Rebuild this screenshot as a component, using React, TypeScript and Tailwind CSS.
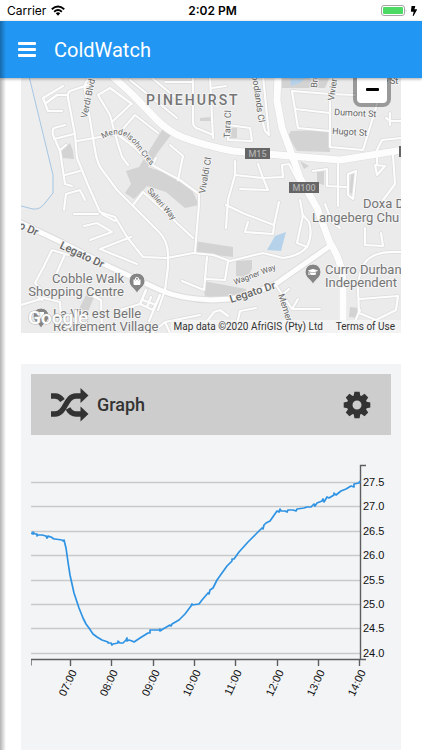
import { FaShoppingBag, FaGraduationCap, FaBolt } from "react-icons/fa";

type Label = {
  text: string;
  x: number;
  y: number;
  size: number;
  rotate?: number;
  weight?: number;
  anchor?: "start" | "middle" | "end";
};

const roads = {
  major: [
    "M108 72 L133 95 L157 120 Q168 131 182 137 Q206 146 233 151 L290 156 L340 160 L403 150",
    "M278 74 L277 101 L282 128 L292 155 L300 178 L317 208 L330 243 Q343 262 343 285 V335",
  ],
  medium: [
    "M19 222 L63 243 L110 267 L160 290 Q180 299 211 300 L230 299 Q253 295 277 283 L330 246",
  ],
  minor: [
    "M91 76 Q83 84 85 90 L90 120 L95 150 Q97 164 103 171 L117 190 L133 206 L157 230 Q168 240 168 255 V267 L165 290",
    "M91 84 L70 91 Q67 93 68 98 L75 135 L77 158 L88 185 L100 212 L115 217 L127 237 L143 257 L167 258 L193 253",
    "M63 86 L43 98 L48 111 H62",
    "M46 103 L57 95 L68 95",
    "M65 125 L54 128 Q52 130 53 135 L60 151 L65 184 L72 186",
    "M54 139 L74 134",
    "M65 175 L80 171",
    "M60 150 L66 145",
    "M77 141 L117 134 L133 146 L152 165 L180 180 L199 194 V204 L195 252",
    "M130 105 L113 121 M132 104 L110 88 L98 95 L110 115 L117 141 L122 157 L128 165",
    "M122 130 L135 115 L158 133",
    "M130 80 L177 118 M152 78 L175 97",
    "M170 145 L183 156 L178 180",
    "M193 76 V122 Q193 128 199 129 L213 135",
    "M165 82 H193",
    "M153 164 L156 158",
    "M64 210 L66 194 L80 190 L85 200",
    "M74 214 H98 M84 226 L97 223 L112 232 L90 240",
    "M115 221 L102 214 M100 249 L137 264 M100 249 L131 237",
    "M72 256 L52 250 L43 268 L35 283 L42 290",
    "M65 254 L55 277",
    "M133 205 L143 192 L162 209 L193 238",
    "M193 253 L213 255 L230 261 L263 253 L283 258 Q299 256 307 247 Q313 235 309 222 L303 215 L297 243 L307 247",
    "M207 257 L204 290 L182 281",
    "M228 261 L225 280 L206 279",
    "M146 290 L140 304 L153 310 L160 295",
    "M151 297 L147 307 M143 300 L156 305",
    "M160 295 L149 321 M165 290 L158 310",
    "M263 76 L269 135 L265 131 L253 84",
    "M210 76 L213 138",
    "M212 88 L226 86",
    "M228 125 L250 128 L252 141 L228 140 Z",
    "M292 91 L330 94 L355 95",
    "M292 91 L298 128 L330 131",
    "M295 109 L330 113",
    "M330 92 V147 L363 150 L377 104",
    "M401 138 L382 140 L377 150 V164",
    "M386 118 L390 121 L401 121 M390 113 V125",
    "M385 166 L377 175 L375 165 L385 166",
    "M393 155 L395 184 L383 200",
    "M235 161 V175 L228 200 L226 228",
    "M235 175 L263 178 L283 177 L282 165 L289 164 L300 185",
    "M258 164 L263 178 L268 190 L240 189",
    "M313 171 L327 169 V186 L346 187",
    "M338 164 V206",
    "M348 174 L356 171 L353 199 L348 195 Z",
    "M226 205 L245 214 L274 225 L273 234 L245 232 L248 222",
    "M274 225 L279 202",
    "M300 200 L303 217",
    "M275 284 L292 309 H320",
    "M292 309 L298 299 M283 294 L289 289",
    "M365 228 V245 L383 246 L381 233",
    "M401 252 Q382 251 373 256 Q359 262 358 290 L359 313 L376 320 L396 310 L398 296 L360 299",
    "M325 204 L332 222 L340 228",
    "M21 305 L44 298 L60 302 L62 333 M30 290 L42 300",
    "M93 296 L101 300 L102 330 M80 290 V300",
    "M150 335 L165 322 L200 315 M165 322 L170 333",
    "M120 310 L140 304 L146 290",
    "M200 330 L214 312 L220 310 L228 316",
    "M235 333 L240 311 L256 308",
    "M360 310 L350 333 M376 320 L377 333",
  ],
};

const buildings = [
  "M164 127 L174 131 L158 152 L148 167 L180 178 L192 190 L199 205 L185 208 L166 192 L147 186 L134 199 L125 193 L131 184 L126 171 L139 167 Z",
  "M70 143 L73 151 L74 159 L63 158 L60 153 Z",
  "M200 118 L211 117 V121 H200 Z",
  "M291 131 L330 130 V152 L297 151 L288 136 Z",
  "M282 76 H330 L325 88 L282 88 Z",
  "M194 241 L233 247 V257 L195 253 Z",
  "M236 261 L252 260 L252 269 L247 278 L236 276 Z",
  "M203 281 L230 286 L246 289 L248 299 L205 297 Z",
  "M230 128 L237 128 V138 L230 138 Z",
  "M317 172 L324 171 V185 L317 183 Z",
  "M351 174 L355 173 L353 195 L349 192 Z",
  "M350 307 L358 308 V318 L349 317 Z",
  "M86 295 L94 297 L88 312 L79 309 Z",
  "M300 161 L309 166 L304 169 Z",
];

const streetLabels: Label[] = [
  { text: "Verdi Blvd", x: 91, y: 99, size: 9, rotate: -78, anchor: "middle" },
  { text: "Salieri Way", x: 147, y: 191, size: 8, rotate: 49 },
  { text: "Vivaldi Cl", x: 205, y: 194, size: 9, rotate: -80 },
  { text: "Tara Cl", x: 230, y: 138, size: 9, rotate: -88 },
  { text: "Woodlands Cl", x: 251, y: 68, size: 9, rotate: 82 },
  { text: "Bri", x: 317, y: 88, size: 9, rotate: -86 },
  { text: "Vivier", x: 334, y: 101, size: 9, rotate: -82 },
  { text: "Dumont St", x: 334, y: 115, size: 9, rotate: 3 },
  { text: "Hugot St", x: 332, y: 134, size: 9, rotate: 3 },
  { text: "e St", x: 383, y: 84, size: 9 },
  { text: "Wagner Way", x: 235, y: 285, size: 8, rotate: -21 },
  { text: "Memer", x: 278, y: 295, size: 9, rotate: 72 },
  { text: "o Dr", x: 18, y: 228, size: 11, rotate: 24, weight: 500 },
  { text: "Legato Dr", x: 59, y: 248, size: 11, rotate: 25, weight: 500 },
  { text: "Legato Dr", x: 231, y: 303, size: 11, rotate: -18, weight: 500 },
];

const placeLabels: Label[] = [
  { text: "Cobble Walk", x: 124, y: 283, size: 13, anchor: "end" },
  { text: "Shopping Centre", x: 124, y: 296, size: 13, anchor: "end" },
  { text: "La Vie est Belle", x: 53, y: 318, size: 13 },
  { text: "Retirement Village", x: 53, y: 331, size: 13 },
  { text: "Doxa D", x: 363, y: 208, size: 13 },
  { text: "Langeberg Chu", x: 312, y: 222, size: 13 },
  { text: "Curro Durban", x: 325, y: 274, size: 13 },
  { text: "Independent", x: 325, y: 287, size: 13 },
];

const MapText = ({ label, color }: { label: Label; color: string }) => (
  <text
    x={label.x}
    y={label.y}
    fontSize={label.size}
    fontWeight={label.weight ?? 400}
    textAnchor={label.anchor ?? "start"}
    transform={
      label.rotate ? `rotate(${label.rotate} ${label.x} ${label.y})` : undefined
    }
    fill={color}
    stroke="#f4f4f4"
    strokeWidth={2}
    strokeLinejoin="round"
    paintOrder="stroke"
  >
    {label.text}
  </text>
);

const Pin = ({ x, y }: { x: number; y: number }) => (
  <path
    d={`M${x} ${y + 13} C${x - 1} ${y + 8} ${x - 8} ${y + 6} ${x - 8} ${y} A8 8 0 0 1 ${x + 8} ${y} C${x + 8} ${y + 6} ${x + 1} ${y + 8} ${x} ${y + 13}Z`}
    fill="#858585"
    stroke="#f0f0f0"
    strokeWidth={1}
  />
);

const RoadShield = ({
  text,
  x,
  y,
  width,
}: {
  text: string;
  x: number;
  y: number;
  width: number;
}) => (
  <g>
    <rect x={x} y={y} width={width} height={11} fill="#666" />
    <text
      x={x + width / 2}
      y={y + 9}
      fontSize={9}
      fontWeight={500}
      textAnchor="middle"
      fill="#b0b0b0"
    >
      {text}
    </text>
  </g>
);

const StreetMap = () => (
  <svg
    viewBox="21 78 380 255"
    className="block w-full bg-[#ebebeb]"
    role="img"
    aria-label="Map"
  >
    <path d="M21 78 H30 L53 175 V193 L40 207 L21 210Z" fill="#eeeeee" />
    {buildings.map((d) => (
      <path key={d} d={d} fill="#d3d3d3" />
    ))}
    <path d="M286 232 L281 251 L267 250 L275 236Z" fill="#b5d2ea" />
    <path d="M290 76 L308 76 L300 83 L291 86Z" fill="#b5d2ea" />
    <path
      d="M29 76 L53 175 V193 L45 203 Q40 210 33 209 L21 206"
      fill="none"
      stroke="#a5c6e2"
      strokeWidth={1}
    />
    <g fill="none" strokeLinejoin="round" strokeLinecap="round">
      <g stroke="#dcdcdc">
        {roads.minor.map((d) => (
          <path key={d} d={d} strokeWidth={3.6} />
        ))}
        {roads.medium.map((d) => (
          <path key={d} d={d} strokeWidth={7} />
        ))}
        {roads.major.map((d) => (
          <path key={d} d={d} strokeWidth={8} />
        ))}
      </g>
      <g stroke="#fdfdfd">
        {roads.minor.map((d) => (
          <path key={d} d={d} strokeWidth={2.2} />
        ))}
        {roads.medium.map((d) => (
          <path key={d} d={d} strokeWidth={5} />
        ))}
        {roads.major.map((d) => (
          <path key={d} d={d} strokeWidth={7} />
        ))}
      </g>
    </g>
    <RoadShield text="M15" x={245} y={148} width={25} />
    <RoadShield text="M100" x={289} y={182} width={30} />
    <rect x={399} y={146} width={4} height={11} fill="#666" />
    <path id="mendelsohn" d="M103 139 Q120 128 133 143 L154 170" fill="none" />
    <text
      fontSize={8}
      fill="#666"
      stroke="#f4f4f4"
      strokeWidth={2}
      paintOrder="stroke"
    >
      <textPath href="#mendelsohn">Mendelsohn Cres</textPath>
    </text>
    {streetLabels.map((label) => (
      <MapText key={label.text + label.x} label={label} color="#666" />
    ))}
    <text
      x={146}
      y={105}
      fontSize={14}
      fontWeight={500}
      letterSpacing={2}
      fill="#757575"
      stroke="#f4f4f4"
      strokeWidth={2}
      paintOrder="stroke"
    >
      PINEHURST
    </text>
    <Pin x={41} y={316} />
    <path d="M38 312 L44 312 L44 316 L41 319 L38 316Z" fill="#fff" />
    {placeLabels.map((label) => (
      <MapText key={label.text} label={label} color="#757575" />
    ))}
    <Pin x={137} y={281} />
    <FaShoppingBag x={133} y={277} size={8} color="#fff" />
    <Pin x={313} y={272} />
    <FaGraduationCap x={308} y={267} size={10} color="#fff" />
    <text
      x={28}
      y={324}
      fontSize={19}
      fontWeight={500}
      fill="#fff"
      stroke="#b0b0b0"
      strokeWidth={1}
      paintOrder="stroke"
    >
      Google
    </text>
  </svg>
);

const StatusBar = () => (
  <div className="grid h-[21px] grid-cols-3 items-center bg-white pr-1 pl-[7px] font-['Inter',sans-serif] text-[12px] text-black">
    <div className="flex items-center gap-1">
      <span>Carrier</span>
      <svg viewBox="0 0 16 12" className="h-[11px] w-4" aria-hidden="true">
        <g fill="none" stroke="#000" strokeWidth={2}>
          <path d="M1.2 4.6 Q8 -1.4 14.8 4.6" />
          <path d="M3.8 7.4 Q8 3.6 12.2 7.4" />
        </g>
        <path d="M5.6 9 Q8 7 10.4 9 L8 11.6Z" />
      </svg>
    </div>
    <span className="text-center font-semibold">2:02 PM</span>
    <div className="flex items-center justify-end gap-[3px]">
      <svg viewBox="0 0 26 12" className="h-3 w-[26px]" aria-hidden="true">
        <rect
          x={0.5}
          y={0.5}
          width={23}
          height={10}
          rx={2.5}
          fill="#fff"
          stroke="#a5a5a5"
        />
        <rect x={2} y={2} width={20} height={7} rx={1} fill="#4cd964" />
        <path d="M24.8 4 Q26 5.5 24.8 7.5Z" fill="#a5a5a5" />
      </svg>
      <FaBolt className="h-[10px] w-2" />
    </div>
  </div>
);

const Header = () => (
  <header className="relative z-10 flex h-[57px] items-center gap-4 bg-[#2196f3] pl-[18px] text-white shadow-[0_1px_3px_rgba(0,0,0,0.35)]">
    <button
      type="button"
      aria-label="Menu"
      className="flex h-5 w-5 flex-col justify-center gap-[3px]"
    >
      <span className="h-[3px] w-[18px] rounded-[1px] bg-white" />
      <span className="h-[3px] w-[18px] rounded-[1px] bg-white" />
      <span className="h-[3px] w-[18px] rounded-[1px] bg-white" />
    </button>
    <h1 className="text-[20px]">ColdWatch</h1>
  </header>
);

const MapPanel = () => (
  <section className="relative overflow-hidden">
    <StreetMap />
    <div className="absolute -top-3 right-[10px] rounded-lg bg-black/35 p-1">
      <button
        type="button"
        aria-label="Zoom out"
        className="flex h-[33px] w-[30px] items-end justify-center rounded bg-white pb-3"
      >
        <span className="h-[3px] w-[13px] rounded-[1px] bg-black" />
      </button>
    </div>
    <div className="absolute right-0 bottom-0 flex gap-[13px] bg-[#f5f5f5]/80 pr-[6px] pl-[3px] text-[10px] leading-[13px] text-[#333]">
      <span>Map data ©2020 AfriGIS (Pty) Ltd</span>
      <a href="#terms">Terms of Use</a>
    </div>
  </section>
);

const temperatures = [27.5, 27, 26.5, 26, 25.5, 25, 24.5, 24];
const hours = [7, 8, 9, 10, 11, 12, 13, 14];

const readings =
  "0,73 2,74 2,72 4,74 6,74 6,76 7,75 11,75 15,76 16,78 17,76 20,77 23,79 24,79 31,80 32,81 33,80 35,88 37,102 39,115 43,133 48,148 52,158 55,164 58,168 62,174 66,177 71,180 77,182 77,183 80,183 81,185 82,184 87,183 87,181 89,183 92,183 95,180 96,178 96,181 98,180 101,181 103,182 109,178 117,173 119,173 119,170 128,170 129,169 129,171 132,169 139,165 140,166 141,164 148,160 154,154 160,146 161,144 161,145 168,144 171,140 177,133 178,134 179,130 182,128 186,120 196,106 201,101 201,99 203,99 208,92 217,82 225,74 231,68 232,69 233,65 235,63 239,61 246,51 248,52 249,49 250,51 254,51 256,52 257,50 262,50 265,51 266,49 273,48 276,47 280,47 283,44 284,46 286,43 291,41 292,39 293,42 296,37 298,38 303,35 303,33 305,35 310,31 315,29 320,26 323,27 323,24 328,23 329,21";

const yOf = (value: number) => Math.round(22 + (27.5 - value) * 48.8);
const xOf = (hour: number) => Math.round(39 + (hour - 7) * 41.3);

const Chart = () => (
  <svg
    viewBox="0 0 360 240"
    className="block w-full font-['Liberation_Sans',Arial,sans-serif] text-[11px]"
    role="img"
    aria-label="Temperature"
  >
    {temperatures.map((value) => (
      <g key={value}>
        <path d={`M0 ${yOf(value)}.5 H329`} stroke="#c7c9cb" strokeWidth={1.3} />
        <text x={332} y={yOf(value) + 4} fill="#111">
          {value.toFixed(1)}
        </text>
      </g>
    ))}
    <path
      d="M335 5.5 H329.5 V200 M0 205.5 V199.5 H335"
      fill="none"
      stroke="#5c5d60"
      strokeWidth={1.4}
    />
    {hours.map((hour) => (
      <g key={hour}>
        <path
          d={`M${xOf(hour)}.5 200 V206`}
          stroke="#5c5d60"
          strokeWidth={1.4}
        />
        <text
          textAnchor="end"
          transform={`translate(${xOf(hour) + 7} 212) rotate(-65)`}
          fill="#111"
        >
          {String(hour).padStart(2, "0")}:00
        </text>
      </g>
    ))}
    <polyline
      points={readings}
      fill="none"
      stroke="#2f93e4"
      strokeWidth={1.7}
      strokeLinejoin="round"
    />
  </svg>
);

const ShuffleIcon = () => (
  <svg viewBox="0 0 38 34" className="h-[34px] w-[38px]" aria-hidden="true">
    <g fill="none" stroke="#333" strokeWidth={5.4}>
      <path d="M0 26 H4 C15 26 14 8 25 8 H31" />
      <path d="M0 8 H4 Q8.500 8 11.500 12.500" />
      <path d="M17 20.500 Q20 26 25 26 H31" />
    </g>
    <path
      d="M29.500 0 L37.500 7.500 L29.500 15Z M29.500 18.500 L37.500 26 L29.500 33.500Z"
      fill="#333"
    />
  </svg>
);

const GearIcon = () => (
  <svg viewBox="-14 -14 28 28" className="h-7 w-7" aria-hidden="true">
    <circle r={7.3} fill="none" stroke="#333" strokeWidth={5.6} />
    {[0, 45, 90, 135, 180, 225, 270, 315].map((angle) => (
      <path
        key={angle}
        d="M-3.400 -8.500 L-2.600 -13.300 H2.600 L3.400 -8.500Z"
        transform={`rotate(${angle})`}
        fill="#333"
      />
    ))}
  </svg>
);

const GraphCard = () => (
  <section className="flex-1 bg-[#f3f4f6] p-[10px]">
    <div className="mb-[25px] flex h-[61px] items-center bg-[#cdcdcd] px-5">
      <ShuffleIcon />
      <h2 className="ml-2 flex-1 text-[18px] font-medium text-[#333]">Graph</h2>
      <button type="button" aria-label="Graph settings">
        <GearIcon />
      </button>
    </div>
    <Chart />
  </section>
);

export default function App() {
  return (
    <div className="relative flex min-h-screen flex-col bg-white font-['Roboto',sans-serif]">
      <StatusBar />
      <Header />
      <main className="flex flex-1 flex-col gap-[31px] px-[21px]">
        <MapPanel />
        <GraphCard />
      </main>
      <div className="pointer-events-none absolute top-[21px] bottom-0 left-0 z-20 w-[6px] bg-linear-to-r from-black/30 to-transparent" />
    </div>
  );
}
